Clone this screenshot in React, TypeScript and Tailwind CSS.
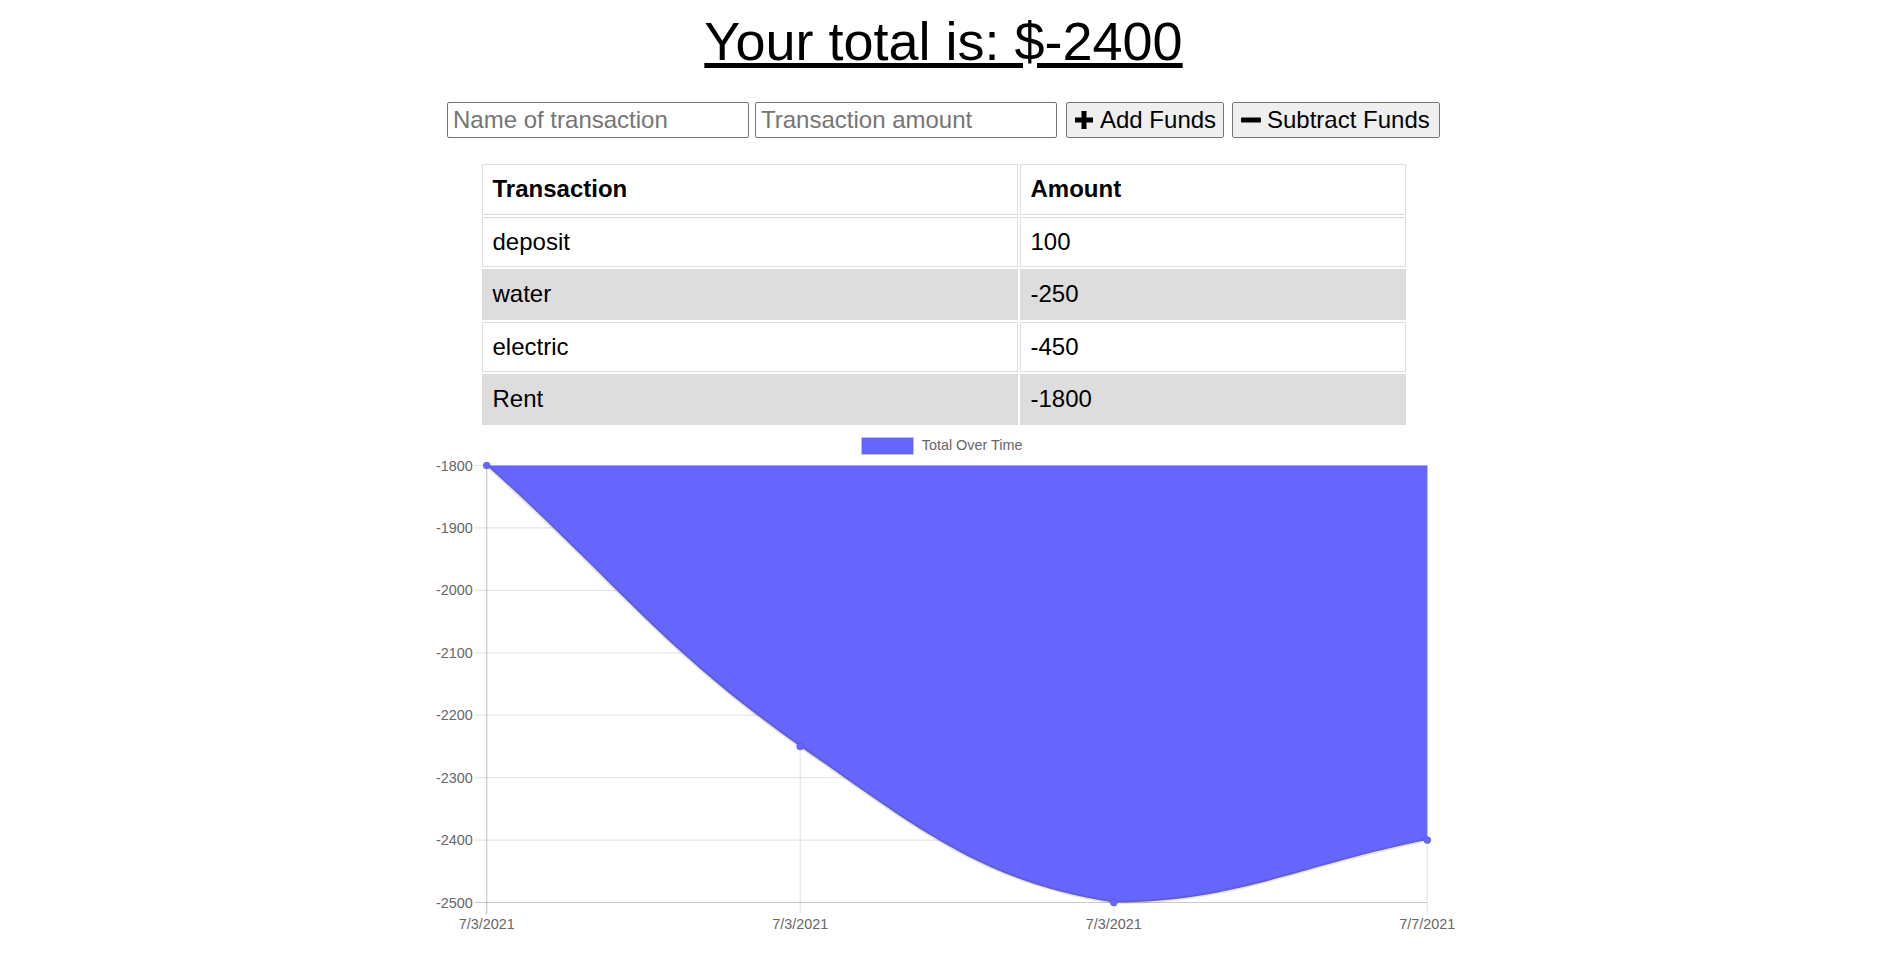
import React from 'react'

type Pt = { x: number, y: number }

const rows = [
  { name: 'deposit', value: '100' },
  { name: 'water', value: '-250' },
  { name: 'electric', value: '-450' },
  { name: 'Rent', value: '-1800' },
]

// chart geometry, in svg coords
const left = 63.7
const right = 1004.3
const top = 38.5
const step = 62.43
const yOf = (v: number) => top + ((-1800 - v) / 100) * step
const xs = [left, 377.2, 690.8, right]
const totals = [-1800, -2250, -2500, -2400]
const labels = ['7/3/2021', '7/3/2021', '7/3/2021', '7/7/2021']
const bottom = yOf(-2500)

const clamp = (p: Pt): Pt => ({
  x: Math.min(Math.max(p.x, left), right),
  y: Math.min(Math.max(p.y, top), bottom),
})

const buildPath = (pts: Pt[]) => {
  const t = 0.4
  const cps = pts.map((cur, i) => {
    const prev = pts[i - 1] || cur
    const next = pts[i + 1] || cur
    const d01 = Math.hypot(cur.x - prev.x, cur.y - prev.y)
    const d12 = Math.hypot(next.x - cur.x, next.y - cur.y)
    const sum = d01 + d12 || 1
    const fa = t * (d01 / sum)
    const fb = t * (d12 / sum)
    return {
      prev: clamp({ x: cur.x - fa * (next.x - prev.x), y: cur.y - fa * (next.y - prev.y) }),
      next: clamp({ x: cur.x + fb * (next.x - prev.x), y: cur.y + fb * (next.y - prev.y) }),
    }
  })
  let d = `M${pts[0].x},${pts[0].y}`
  for (let i = 0; i < pts.length - 1; i++) {
    const a = cps[i].next
    const b = cps[i + 1].prev
    const p = pts[i + 1]
    d += ` C${a.x},${a.y} ${b.x},${b.y} ${p.x},${p.y}`
  }
  return d
}

const Chart = () => {
  const pts = xs.map((x, i) => ({ x, y: yOf(totals[i]) }))
  const line = buildPath(pts)
  const fill = `${line} L${right},${top} L${left},${top} Z`
  const ticks = [-1800, -1900, -2000, -2100, -2200, -2300, -2400, -2500]
  const font = '"Liberation Sans", Arial, sans-serif'

  return (
    <svg width="1041" height="513" viewBox="0 0 1041 513" className="block mx-auto">
      {ticks.map((v) => (
        <line key={v} x1={left - 12} x2={right} y1={yOf(v)} y2={yOf(v)} stroke="rgba(0,0,0,0.1)" strokeWidth="1.2" />
      ))}
      {xs.map((x, i) => (
        <line key={i} x1={x} x2={x} y1={top} y2={bottom + 12} stroke="rgba(0,0,0,0.1)" strokeWidth="1.2" />
      ))}
      <line x1={left} x2={left} y1={top} y2={bottom + 12} stroke="rgba(0,0,0,0.12)" strokeWidth="1.2" />
      <line x1={left - 12} x2={right} y1={bottom} y2={bottom} stroke="rgba(0,0,0,0.12)" strokeWidth="1.2" />

      <path d={fill} fill="#6666ff" />
      <path d={line} fill="none" stroke="rgba(0,0,0,0.1)" strokeWidth="3.6" />
      {pts.map((p, i) => (
        <circle key={i} cx={p.x} cy={p.y} r="3.6" fill="#6666ff" stroke="rgba(0,0,0,0.1)" strokeWidth="1.2" />
      ))}

      {ticks.map((v) => (
        <text key={v} x={49.7} y={yOf(v)} textAnchor="end" dominantBaseline="central" fontSize="14.4" fill="#666" fontFamily={font}>
          {v}
        </text>
      ))}
      {xs.map((x, i) => (
        <text key={i} x={x} y={496.5} textAnchor="middle" dominantBaseline="central" fontSize="14.4" fill="#666" fontFamily={font}>
          {labels[i]}
        </text>
      ))}

      <rect x="438.7" y="10.7" width="51.6" height="16.6" fill="#6666ff" stroke="rgba(0,0,0,0.1)" strokeWidth="1.2" />
      <text x="498.7" y="18.3" dominantBaseline="central" fontSize="14.4" fill="#666" fontFamily={font}>
        Total Over Time
      </text>
    </svg>
  )
}

export default function App() {
  return (
    <div className="w-[1887px] bg-white text-black font-['Liberation_Sans',Arial,sans-serif]">
      <h1 className="mt-[10px] text-center text-[54px] leading-[62px] font-normal underline">
        Your total is: $-2400
      </h1>

      <div className="mt-[30px] flex justify-center items-center text-[24px]">
        <input
          type="text"
          placeholder="Name of transaction"
          className="w-[302px] h-[36px] px-[5px] border border-[#767676] rounded-[2px] placeholder:text-[#757575] outline-none"
        />
        <input
          type="number"
          placeholder="Transaction amount"
          className="ml-[6px] w-[302px] h-[36px] px-[5px] border border-[#767676] rounded-[2px] placeholder:text-[#757575] outline-none"
        />
        <button className="ml-[9px] w-[158px] h-[36px] flex items-center gap-[7px] pl-[8px] border border-[#767676] rounded-[2px] bg-[#efefef]">
          <svg width="18" height="18" viewBox="0 0 18 18">
            <path d="M6.5 0h5v6.5H18v5h-6.5V18h-5v-6.5H0v-5h6.5z" fill="#000" />
          </svg>
          <span>Add Funds</span>
        </button>
        <button className="ml-[8px] w-[208px] h-[36px] flex items-center gap-[6px] pl-[8px] border border-[#767676] rounded-[2px] bg-[#efefef]">
          <svg width="20" height="18" viewBox="0 0 20 18">
            <rect x="0" y="6.5" width="20" height="5" rx="1" fill="#000" />
          </svg>
          <span>Subtract Funds</span>
        </button>
      </div>

      <table className="mt-[24px] mx-auto w-[928px] border-separate border-spacing-[2px] text-[24px]">
        <thead>
          <tr>
            <th className="w-[536px] h-[50.5px] px-[10px] text-left font-bold border border-[#dddddd]">Transaction</th>
            <th className="h-[50.5px] px-[10px] text-left font-bold border border-[#dddddd]">Amount</th>
          </tr>
        </thead>
        <tbody>
          {rows.map((r, i) => (
            <tr key={r.name}>
              <td className={`h-[50.5px] px-[10px] border border-[#dddddd] ${i % 2 === 1 ? 'bg-[#dddddd]' : ''}`}>{r.name}</td>
              <td className={`h-[50.5px] px-[10px] border border-[#dddddd] ${i % 2 === 1 ? 'bg-[#dddddd]' : ''}`}>{r.value}</td>
            </tr>
          ))}
        </tbody>
      </table>

      <Chart />
    </div>
  )
}
